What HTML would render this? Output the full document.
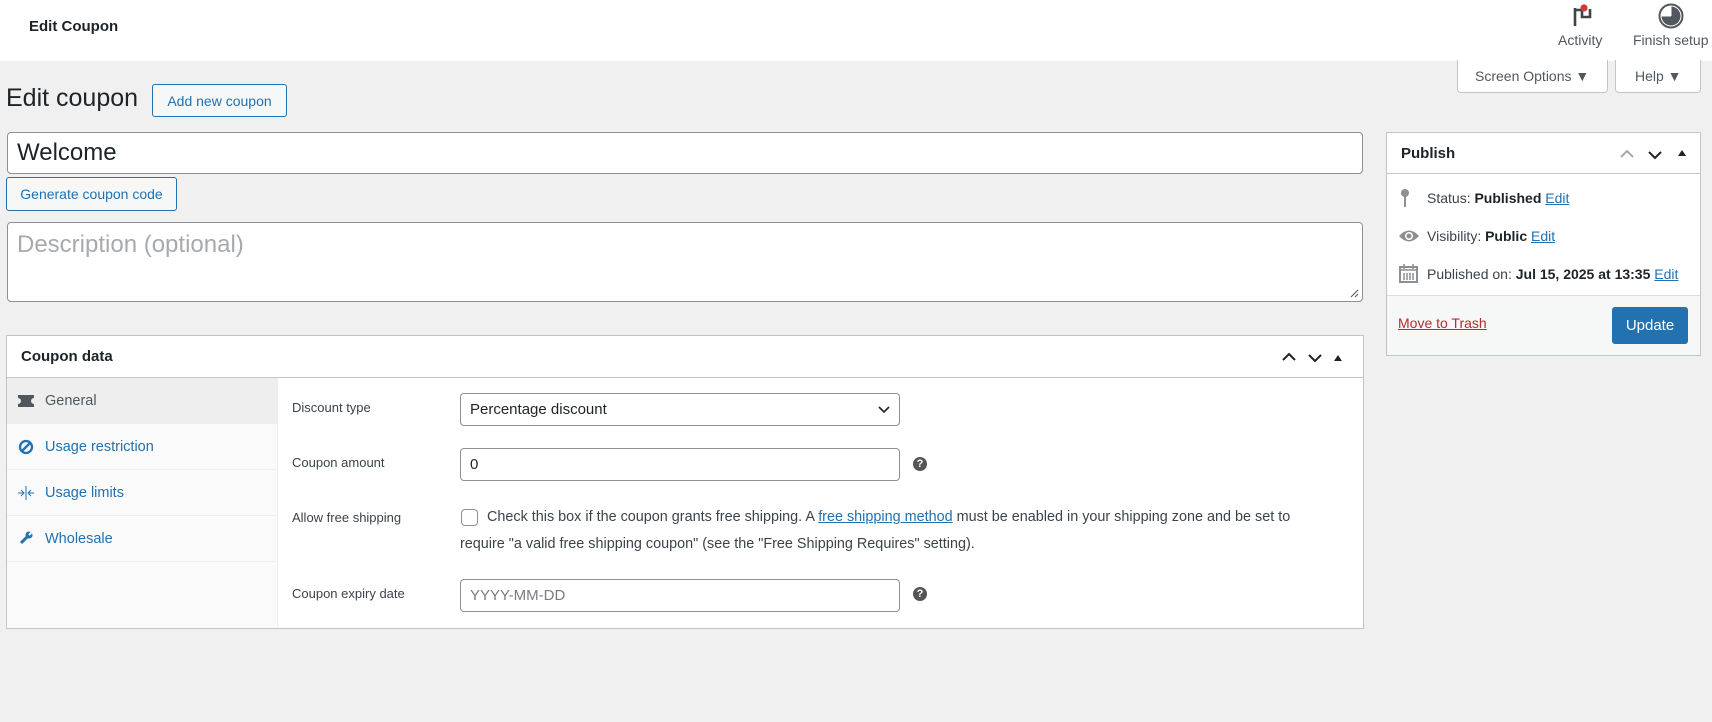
<!DOCTYPE html>
<html><head><meta charset="utf-8"><style>
*{box-sizing:border-box;margin:0;padding:0}
body{width:1712px;height:722px;background:#f0f0f1;font-family:"Liberation Sans",sans-serif;color:#1d2327;position:relative;overflow:hidden;font-size:14px}
.a{position:absolute}
.top{left:0;top:0;width:1712px;height:61px;background:#fff}
.btn{position:absolute;border:1px solid #2271b1;color:#2271b1;background:#f6f7f7;border-radius:3px;font-size:14px;display:flex;align-items:center;justify-content:center}
.inp{position:absolute;background:#fff;border:1px solid #8c8f94;border-radius:4px}
.box{position:absolute;background:#fff;border:1px solid #c3c4c7}
a{color:#2271b1;text-decoration:underline}
.lbl{position:absolute;left:292px;font-size:13px;color:#3c434a}
.tab{position:absolute;left:0;width:271px;height:46px;border-bottom:1px solid #eee;display:flex;align-items:center;padding-left:38px;color:#2271b1;font-size:14.5px}
.help{position:absolute;width:14px;height:14px;border-radius:50%;background:#555;color:#fff;font-size:11px;font-weight:bold;text-align:center;line-height:14px}
</style></head><body>
<div class="a top"></div>
<div class="a" style="left:29px;top:18px;font-size:15px;font-weight:bold">Edit Coupon</div>
<svg class="a" style="left:1570px;top:3px" width="26" height="24" viewBox="0 0 26 24"><path d="M5 5v18M5 7h7v7h8V6" stroke="#3c434a" stroke-width="2.6" fill="none"/><circle cx="14" cy="5" r="3.6" fill="#d63638"/></svg>
<div class="a" style="left:1558px;top:32px;font-size:14px;color:#50575e">Activity</div>
<svg class="a" style="left:1658px;top:3px" width="26" height="26" viewBox="0 0 26 26"><circle cx="13" cy="13" r="11.5" stroke="#50575e" stroke-width="2" fill="#fff"/><path d="M13 3.5A9.5 9.5 0 1 1 3.5 13H13Z" fill="#50575e"/><path d="M13 13V3.5M3.5 13H13" stroke="#fff" stroke-width="1"/></svg>
<div class="a" style="left:1633px;top:32px;font-size:14px;color:#50575e">Finish setup</div>
<div class="a" style="left:1457px;top:60px;width:151px;height:33px;background:#fff;border:1px solid #c3c4c7;border-top:none;border-radius:0 0 4px 4px;color:#50575e;font-size:14px;padding:8px 0 0 17px">Screen Options ▼</div>
<div class="a" style="left:1615px;top:60px;width:86px;height:33px;background:#fff;border:1px solid #c3c4c7;border-top:none;border-radius:0 0 4px 4px;color:#50575e;font-size:14px;padding:8px 0 0 19px">Help ▼</div>
<div class="a" style="left:6px;top:84px;font-size:25px">Edit coupon</div>
<div class="btn" style="left:152px;top:84px;width:135px;height:33px">Add new coupon</div>
<div class="inp" style="left:7px;top:132px;width:1356px;height:42px;font-size:24px;padding:6px 0 0 9px">Welcome</div>
<div class="btn" style="left:6px;top:177px;width:171px;height:34px">Generate coupon code</div>
<div class="inp" style="left:7px;top:222px;width:1356px;height:80px;font-size:24px;padding:8px 0 0 9px;color:#a7aaad">Description (optional)</div>
<svg class="a" style="left:1349px;top:288px" width="10" height="10"><path d="M2 9L9 2M6 9L9 6" stroke="#555" stroke-width="1"/></svg>

<div class="box" style="left:6px;top:335px;width:1358px;height:294px">
 <div class="a" style="left:0;top:0;width:1356px;height:42px;border-bottom:1px solid #c3c4c7"></div>
 <div class="a" style="left:14px;top:12px;font-size:15px;font-weight:bold">Coupon data</div>
 <svg class="a" style="left:1274px;top:12px" width="70" height="20"><path d="M2 12l6-6 6 6M28 7l6 6 6-6" stroke="#1d2327" stroke-width="2" fill="none"/><path d="M53 13l4-6 4 6z" fill="#1d2327"/></svg>
 <div class="a" style="left:0;top:42px;width:271px;height:250px;background:#fafafa;border-right:1px solid #eee"></div>
 <div class="tab" style="top:42px;background:#eee;color:#50575e">General</div>
 <div class="tab" style="top:88px">Usage restriction</div>
 <div class="tab" style="top:134px">Usage limits</div>
 <div class="tab" style="top:180px">Wholesale</div>
 <svg class="a" style="left:11px;top:58px" width="16" height="14"><path d="M0 1h16v3a3 3 0 0 0 0 6v3H0v-3a3 3 0 0 0 0-6z" fill="#50575e"/></svg>
 <svg class="a" style="left:11px;top:103px" width="16" height="16"><circle cx="8" cy="8" r="6" stroke="#2271b1" stroke-width="2.3" fill="none"/><path d="M4 12L12 4" stroke="#2271b1" stroke-width="2.3"/></svg>
 <svg class="a" style="left:11px;top:150px" width="16" height="14"><path d="M8 0v14M0 7h5M11 7h5M3 4l3 3-3 3M13 4l-3 3 3 3" stroke="#2271b1" stroke-width="1" fill="none"/></svg>
 <svg class="a" style="left:11px;top:194px" width="16" height="16"><path d="M3 13L9 7" stroke="#2271b1" stroke-width="3"/><circle cx="11" cy="5" r="3.5" fill="#2271b1"/><path d="M11 5l3-3" stroke="#fafafa" stroke-width="2"/></svg>
</div>
<div class="lbl" style="top:400px">Discount type</div>
<div class="inp" style="left:460px;top:393px;width:440px;height:33px;padding:7px 0 0 9px;font-size:15px">Percentage discount</div>
<svg class="a" style="left:878px;top:406px" width="12" height="8"><path d="M1 1l5 5 5-5" stroke="#1d2327" stroke-width="1.6" fill="none"/></svg>
<div class="lbl" style="top:455px">Coupon amount</div>
<div class="inp" style="left:460px;top:448px;width:440px;height:33px;padding:7px 0 0 9px;font-size:15px">0</div>
<div class="help" style="left:913px;top:457px">?</div>
<div class="lbl" style="top:510px">Allow free shipping</div>
<div class="inp" style="left:461px;top:509px;width:17px;height:17px;border-radius:4px"></div>
<div class="a" style="left:487px;top:509px;font-size:14.4px;color:#3c434a">Check this box if the coupon grants free shipping. A <a>free shipping method</a> must be enabled in your shipping zone and be set to</div>
<div class="a" style="left:460px;top:536px;font-size:14.4px;color:#3c434a">require "a valid free shipping coupon" (see the "Free Shipping Requires" setting).</div>
<div class="lbl" style="top:586px">Coupon expiry date</div>
<div class="inp" style="left:460px;top:579px;width:440px;height:33px;padding:7px 0 0 9px;font-size:15px;color:#787c82">YYYY-MM-DD</div>
<div class="help" style="left:913px;top:587px">?</div>

<div class="box" style="left:1386px;top:132px;width:315px;height:224px">
 <div class="a" style="left:0;top:0;width:313px;height:41px;border-bottom:1px solid #c3c4c7"></div>
 <div class="a" style="left:14px;top:12px;font-size:15px;font-weight:bold">Publish</div>
 <svg class="a" style="left:232px;top:12px" width="80" height="20"><path d="M2 12l6-6 6 6" stroke="#a7aaad" stroke-width="2" fill="none"/><path d="M30 7l6 6 6-6" stroke="#1d2327" stroke-width="2" fill="none"/><path d="M59 11l4-6 4 6z" fill="#1d2327"/></svg>
 <svg class="a" style="left:12px;top:55px" width="12" height="20"><circle cx="6" cy="5" r="4" fill="#8c8f94"/><path d="M6 8v11" stroke="#8c8f94" stroke-width="2"/></svg>
 <div class="a" style="left:40px;top:57px;font-size:14px;color:#3c434a">Status: <b style="color:#1d2327">Published</b> <a>Edit</a></div>
 <svg class="a" style="left:11px;top:96px" width="22" height="14"><path d="M1 7Q11-4 21 7Q11 18 1 7z" fill="#8c8f94"/><circle cx="11" cy="7" r="4" fill="#fff"/><circle cx="11" cy="7" r="2.5" fill="#8c8f94"/></svg>
 <div class="a" style="left:40px;top:95px;font-size:14px;color:#3c434a">Visibility: <b style="color:#1d2327">Public</b> <a>Edit</a></div>
 <svg class="a" style="left:12px;top:131px" width="19" height="19"><rect x="1" y="3" width="17" height="15" fill="none" stroke="#8c8f94" stroke-width="2"/><path d="M1 6h17M5 0v5M14 0v5M5 9v7M8 9v7M11 9v7M14 9v7" stroke="#8c8f94" stroke-width="1.5"/></svg>
 <div class="a" style="left:40px;top:133px;font-size:14px;color:#3c434a">Published on: <b style="color:#1d2327">Jul 15, 2025 at 13:35</b> <a>Edit</a></div>
 <div class="a" style="left:0;top:162px;width:313px;height:60px;background:#f6f7f7;border-top:1px solid #dcdcde"></div>
 <div class="a" style="left:11px;top:182px;font-size:14px"><a style="color:#b32d2e">Move to Trash</a></div>
 <div class="a" style="left:225px;top:174px;width:76px;height:37px;background:#2271b1;border-radius:3px;color:#fff;font-size:15px;text-align:center;line-height:37px">Update</div>
</div>
</body></html>
